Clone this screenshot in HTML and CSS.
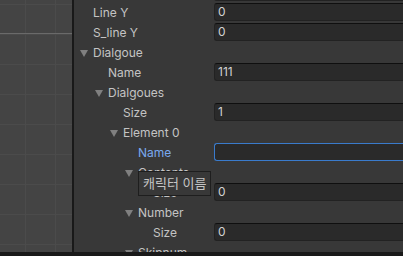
FILE: index.html
```html
<!DOCTYPE html>
<html lang="en">
<head>
    <meta charset="UTF-8">
    <meta name="viewport" content="width=device-width, initial-scale=1.0">
    <title>Inspector</title>
    <link rel="stylesheet" href="styles.css">
</head>
<body>

    <div class="window">
        <div class="main">
            <div class="scene">
                <div class="axis"></div>
            </div>
            <div class="divider"></div>
            <div class="inspector">
                <div class="row row-cut">
                    <div class="label"></div>
                    <div class="field"></div>
                </div>
                <div class="row">
                    <div class="label lv0">Line Y</div>
                    <div class="field">0</div>
                </div>
                <div class="row">
                    <div class="label lv0">S_line Y</div>
                    <div class="field">0</div>
                </div>
                <div class="row">
                    <div class="label lv0"><span class="arrow"></span>Dialgoue</div>
                </div>
                <div class="row">
                    <div class="label lv1">Name</div>
                    <div class="field">111</div>
                </div>
                <div class="row">
                    <div class="label lv1"><span class="arrow"></span>Dialgoues</div>
                </div>
                <div class="row">
                    <div class="label lv2">Size</div>
                    <div class="field">1</div>
                </div>
                <div class="row">
                    <div class="label lv2"><span class="arrow"></span>Element 0</div>
                </div>
                <div class="row">
                    <div class="label lv3 active">Name</div>
                    <div class="field focused"></div>
                </div>
                <div class="row">
                    <div class="label lv3"><span class="arrow"></span>Contents</div>
                </div>
                <div class="row">
                    <div class="label lv4">Size</div>
                    <div class="field">0</div>
                </div>
                <div class="row">
                    <div class="label lv3"><span class="arrow"></span>Number</div>
                </div>
                <div class="row">
                    <div class="label lv4">Size</div>
                    <div class="field">0</div>
                </div>
                <div class="row">
                    <div class="label lv3"><span class="arrow"></span>Skipnum</div>
                </div>

                <div class="tooltip">캐릭터 이름</div>
            </div>
        </div>
        <div class="bottom-bar"></div>
    </div>

</body>
</html>
```

FILE: styles.css
```css
body {
    margin: 0;
    font-family: Inter, "Noto Sans CJK KR", sans-serif;
    font-size: 12px;
    background: #383838;
    overflow: hidden;
}
.window {
    display: flex;
    flex-direction: column;
    width: 403px;
    height: 256px;
}
.main {
    display: flex;
    height: 252px;
    overflow: hidden;
}
.bottom-bar {
    flex: 1;
    background: #191919;
}
.scene {
    width: 72px;
    position: relative;
    background-color: #444444;
    background-image:
        linear-gradient(to right, #4b4b4b 1px, transparent 1px),
        linear-gradient(to bottom, #4b4b4b 1px, transparent 1px);
    background-size: 30px 30px;
    background-position: 25px 4px;
}
.axis {
    position: absolute;
    left: 0;
    right: 0;
    top: 33px;
    height: 1px;
    background: #6a6a6a;
}
.divider {
    width: 2px;
    background: #191919;
}
.inspector {
    flex: 1;
    position: relative;
    padding-top: 2px;
}
.row {
    display: flex;
    align-items: center;
    height: 20px;
}
.row-cut {
    margin-top: -20px;
}
.label {
    width: 140px;
    box-sizing: border-box;
    color: #c4c4c4;
    white-space: nowrap;
}
.lv0 { padding-left: 19px; }
.lv1 { padding-left: 34px; }
.lv2 { padding-left: 49px; }
.lv3 { padding-left: 64px; }
.lv4 { padding-left: 79px; }
.label.active {
    color: #7aa9ef;
}
.arrow {
    display: inline-block;
    margin-left: -13px;
    margin-right: 5px;
    width: 0;
    height: 0;
    border-left: 4px solid transparent;
    border-right: 4px solid transparent;
    border-top: 7px solid #808080;
    vertical-align: 0;
}
.field {
    flex: 1;
    height: 18px;
    box-sizing: border-box;
    background: #2a2a2a;
    border: 1px solid #222222;
    border-top-color: #0f0f0f;
    border-radius: 3px 0 0 3px;
    border-right: none;
    color: #d2d2d2;
    padding-left: 3px;
    line-height: 16px;
}
.field.focused {
    border-color: #3a7bcc;
}
.tooltip {
    position: absolute;
    left: 64px;
    top: 171px;
    width: 73px;
    height: 25px;
    box-sizing: border-box;
    background: #383838;
    border: 1px solid #1e1e1e;
    color: #c4c4c4;
    font-size: 13px;
    padding-left: 4px;
    line-height: 23px;
    white-space: nowrap;
}
```
